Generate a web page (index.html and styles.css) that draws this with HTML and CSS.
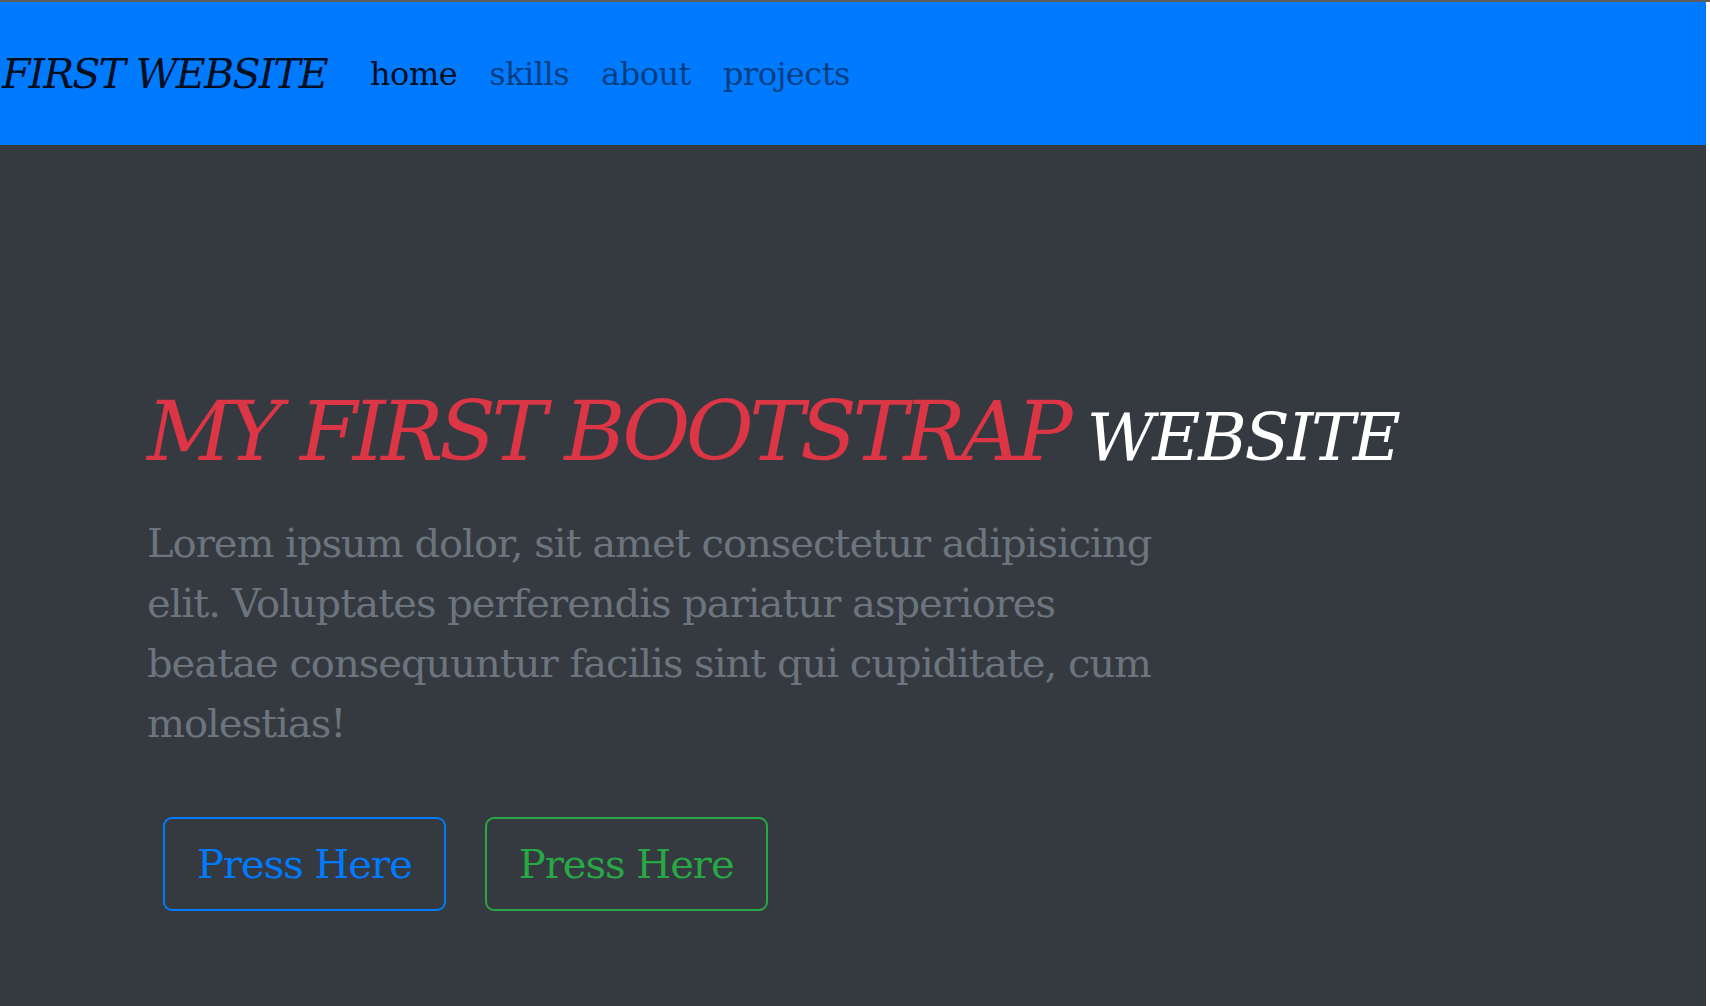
FILE: index.html
```html
<!DOCTYPE html>
<html lang="en">
<head>
<meta charset="utf-8">
<title>First Website</title>
<link rel="stylesheet" href="styles.css">
</head>
<body>
<div class="page">
  <nav class="navbar">
    <a class="brand" href="#">FIRST WEBSITE</a>
    <ul class="nav-links">
      <li><a class="nav-link active" href="#">home</a></li>
      <li><a class="nav-link" href="#">skills</a></li>
      <li><a class="nav-link" href="#">about</a></li>
      <li><a class="nav-link" href="#">projects</a></li>
    </ul>
  </nav>
  <main class="hero">
    <h1 class="hero-title"><span class="title-main">MY FIRST BOOTSTRAP</span><span class="title-small"> WEBSITE</span></h1>
    <p class="lead">Lorem ipsum dolor, sit amet consectetur adipisicing elit. Voluptates perferendis pariatur asperiores beatae consequuntur facilis sint qui cupiditate, cum molestias!</p>
    <div class="actions">
      <button class="btn btn-primary-outline">Press Here</button>
      <button class="btn btn-success-outline">Press Here</button>
    </div>
  </main>
</div>
</body>
</html>
```
FILE: styles.css
```css
html, body {
  margin: 0;
  padding: 0;
}

body {
  background: #ffffff;
  border-top: 2px solid #5e5e5e;
  font-family: "DejaVu Serif", "Liberation Serif", serif;
}

.page {
  margin-right: 4px;
  min-height: calc(100vh - 2px);
  background: #343a40;
  display: flex;
  flex-direction: column;
}

.navbar {
  height: 143px;
  background: #007bff;
  display: flex;
  align-items: center;
  padding-left: 2px;
}

.brand {
  font-size: 41px;
  font-style: italic;
  letter-spacing: -1.75px;
  color: rgba(0, 0, 0, 0.9);
  text-decoration: none;
  margin-right: 27px;
  white-space: nowrap;
}

.nav-links {
  list-style: none;
  margin: 0;
  padding: 0;
  display: flex;
}

.nav-link {
  display: block;
  padding: 0 16px;
  font-size: 32px;
  letter-spacing: -0.5px;
  color: rgba(0, 0, 0, 0.5);
  text-decoration: none;
}

.nav-link.active {
  color: rgba(0, 0, 0, 0.9);
}

.hero {
  padding: 237px 0 0 147px;
}

.hero-title {
  margin: 0;
  font-size: 83px;
  font-weight: 400;
  font-style: italic;
  line-height: 100px;
  white-space: nowrap;
}

.title-main {
  letter-spacing: -4.5px;
  color: #dc3545;
}

.title-small {
  font-size: 66px;
  line-height: 1;
  letter-spacing: -2.3px;
  color: #ffffff;
}

.lead {
  margin: 31px 0 0;
  width: 1040px;
  font-size: 40px;
  line-height: 60px;
  letter-spacing: -1px;
  color: #6c757d;
}

.actions {
  margin: 64px 0 0 16px;
  display: flex;
  gap: 39px;
}

.btn {
  font-family: inherit;
  font-size: 40px;
  line-height: 60px;
  letter-spacing: -1px;
  padding: 15px 32px;
  background: transparent;
  border: 2px solid;
  border-radius: 9px;
  cursor: pointer;
}

.btn-primary-outline {
  color: #007bff;
  border-color: #007bff;
}

.btn-success-outline {
  color: #28a745;
  border-color: #28a745;
}
```
